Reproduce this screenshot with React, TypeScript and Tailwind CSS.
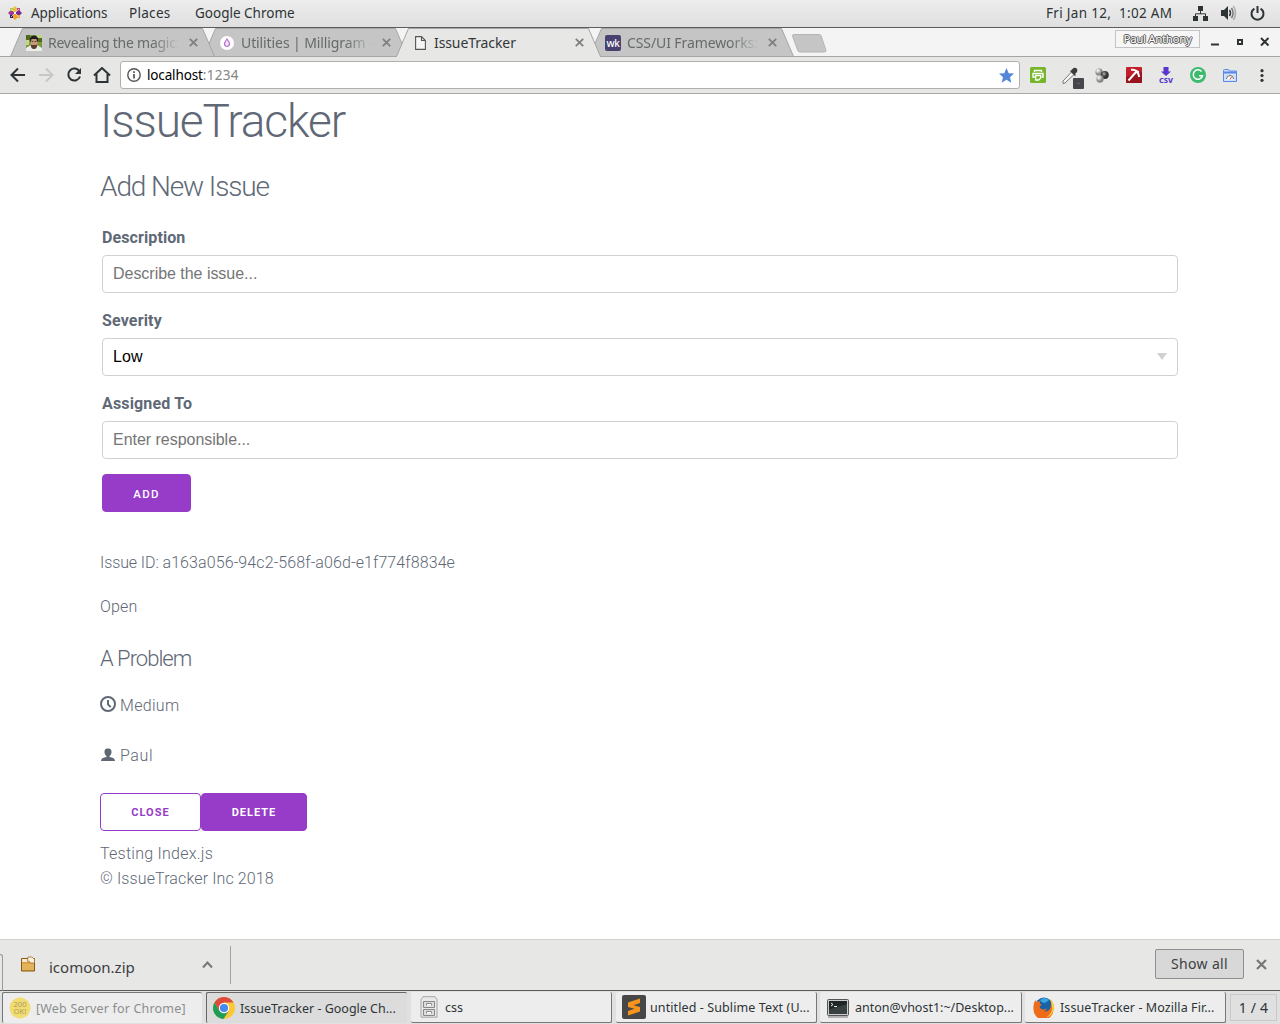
import React from "react";

const ui = "font-['Noto_Sans','Open_Sans',sans-serif] whitespace-nowrap";

function TabCross() {
  return (
    <svg width="9" height="9" viewBox="0 0 9 9" className="shrink-0" stroke="#7f8080" strokeWidth="1.8">
      <path d="M.8 .8 8.2 8.2M8.2 .8.8 8.2" />
    </svg>
  );
}

function Tab({ title, icon, active, place, spacing }: {
  title: string; icon: React.ReactNode; active?: boolean; place: string; spacing: string;
}) {
  const fade = active ? "" : "[mask-image:linear-gradient(to_right,black_calc(100%-28px),transparent)]";
  return (
    <div className={`relative -mr-3 h-[29px] w-[205px] shrink-0 ${place}`}>
      <svg className="absolute inset-0" width="205" height="29" viewBox="0 0 205 29">
        <path d="M.5 29 12.5 .5H192.5L204.5 29Z" fill={active ? "#e7e7e5" : "#c5c5c5"} />
        <path d="M.5 28.5 12.5 .5H192.5L204.5 28.5" fill="none" stroke="#a5a5a5" />
        {!active && <path d="M0 28.5H205" stroke="#a5a5a5" />}
      </svg>
      <div className="relative flex h-[29px] items-center pl-4">
        <span className="flex size-4 shrink-0 items-center justify-center">{icon}</span>
        <span className={`${ui} ml-1.5 ${spacing} ${fade} h-5 w-[132px] text-[14px] leading-5 ${active ? "text-[#33373a]" : "text-[#666a6a]"}`}>{title}</span>
        <span className="ml-auto mr-[17px] flex"><TabCross /></span>
      </div>
    </div>
  );
}

function TopPanel() {
  return (
    <header className={`${ui} flex h-7 items-center border-b border-[#5c5c5c] bg-linear-to-b from-[#ededed] to-[#dfdfdf] pb-px text-[13.5px] leading-5 text-[#2e3436]`}>
      <svg width="14" height="14" viewBox="0 0 14 14" className="ml-2 mr-[9px]">
        <path d="m7 0 2 2v4H5V2Z" fill="#e8c33c" />
        <path d="m14 7-2 2H8V5h4Z" fill="#7b2e8c" />
        <path d="m7 14-2-2V8h4v4Z" fill="#f0a02c" />
        <path d="m0 7 2-2h4v4H2Z" fill="#a03a98" />
        <path d="M2 2h3v3H2Z" fill="#b2c84f" /><path d="M9 2h3v3H9Z" fill="#c7459a" />
        <path d="M2 9h3v3H2Z" fill="#29246b" /><path d="M9 9h3v3H9Z" fill="#eba33a" />
        <path d="m3 3 8 8m0-8-8 8" stroke="#eee" strokeWidth=".7" />
      </svg>
      <span className="w-[98px] tracking-[-.1px]">Applications</span>
      <span className="w-[66px] tracking-[.3px]">Places</span>
      <span>Google Chrome</span>
      <span className="ml-auto w-[147px] whitespace-pre tracking-[.32px]">Fri Jan 12,  1:02 AM</span>
      <svg width="15" height="15" viewBox="0 0 15 15" fill="#2e3436">
        <path d="M5 0h5v5H5ZM0 10h5v5H0ZM10 10h5v5h-5Z" /><path d="M7.5 4v4M2.5 11V7.8h10V11" fill="none" stroke="#2e3436" />
      </svg>
      <svg width="16" height="16" viewBox="0 0 16 16" className="ml-[13px]" fill="none">
        <path d="M0 5h3l4-4v14l-4-4H0Z" fill="#2e3436" />
        <path d="M8.5 5q2 3 0 6" stroke="#2e3436" strokeWidth="1.5" />
        <path d="M10.5 3q3.2 5 0 10" stroke="#777" strokeWidth="1.5" />
        <path d="M12.5 1q4 7 0 14" stroke="#aaa" strokeWidth="1.5" />
      </svg>
      <svg width="15" height="15" viewBox="0 0 15 15" className="ml-[13px] mr-[15px]" fill="none" stroke="#2e3436" strokeWidth="2">
        <path d="M4.4 2.6a6 6 0 1 0 6.2 0M7.5 0v7" />
      </svg>
    </header>
  );
}

function TabStrip() {
  return (
    <div className="flex h-[29px] bg-[#f4f4f4] pl-2.5 shadow-[inset_0_-1px_0_#a5a5a5]">
      <Tab place="z-30" title="Revealing the magic:" spacing="tracking-[-.25px]" icon={
        <svg width="16" height="16" viewBox="0 0 16 16">
          <rect width="16" height="16" fill="#7d9b3d" /><path d="M0 0h4v5H0ZM12 3h4v4h-4Z" fill="#4e6a20" />
          <path d="M10 0h6v3h-5ZM0 5h3v5H0Z" fill="#c3d48e" />
          <path d="M0 16v-3l5-3h6l5 3v3Z" fill="#e8efe8" /><path d="M4.500 4h7v6q-1 4-3.500 4T4.500 10Z" fill="#c49a78" />
          <path d="M4 6.500V3q1-2.500 4-2.500T12 3v3.500h-1L10.500 4h-5L5 6.500Z" fill="#231d1b" />
          <path d="M4.700 9.500 6 10h4l1.300-.5Q11 14 8 14T4.700 9.500Z" fill="#5b3d30" /><path d="M5.800 6.500h1.500M8.800 6.500h1.500" stroke="#3b2820" strokeWidth=".8" />
        </svg>} />
      <Tab place="z-20" title="Utilities | Milligram -" spacing="tracking-[-.1px]" icon={
        <svg width="14" height="14" viewBox="0 0 14 14">
          <circle cx="7" cy="7" r="7" fill="#fff" />
          <path d="M7 3q2.500 3.200 2.500 4.800a2.500 2.500 0 0 1-5 0Q4.500 6.200 7 3Z" fill="#f0dcf8" stroke="#b36fd4" strokeWidth="1.200" />
          <path d="M7 6.500v3" stroke="#fff" />
        </svg>} />
      <Tab place="z-40" active title="IssueTracker" spacing="tracking-[-.1px]" icon={
        <svg width="11" height="14" viewBox="0 0 11 14" fill="#f5f5f5" stroke="#555" strokeWidth="1.1"><path d="M.6.6h5.900l3.900 3.900v8.900H.6ZM6.500.6v3.900h3.900" /></svg>} />
      <Tab place="z-30" title="CSS/UI Frameworks:" spacing="tracking-[-.1px]" icon={
        <span className="flex size-4 items-center justify-center rounded-[2px] bg-[#484170] font-['Noto_Sans',sans-serif] text-[10px] font-medium leading-none tracking-[-.3px] text-white">wk</span>} />
      <svg width="36" height="19" viewBox="0 0 36 19" className="ml-[9px] mt-[6px]">
        <path d="M3 .5h25q1.500 0 2 1l5 15q0 1.500-1.500 1.500H9q-1.500 0-2-1L1.500 2Q1.200.5 3 .5Z" fill="#c5c5c5" stroke="#b5b5b5" />
      </svg>
      <div className={`${ui} ml-auto mt-[2px] flex h-[18px] w-[85px] items-center justify-center border border-[#c3c3c3] bg-[#f6f6f6] text-[11.500px] tracking-[-.35px] text-white [text-shadow:1px_0_#555,-1px_0_#555,0_1px_#555,0_-1px_#555]`}>Paul Anthony</div>
      <svg width="60" height="12" viewBox="0 0 60 12" className="ml-[10px] mt-2 mr-[10px]" fill="none" stroke="#2e3436" strokeWidth="2">
        <path d="M1 8.500h8M28 4h4v4h-4ZM51 2l7.500 7.500M58.500 2 51 9.500" />
      </svg>
    </div>
  );
}

function Toolbar() {
  return (
    <div className="flex h-[37px] items-center border-b border-[#a8a8a8] bg-[#e7e7e5]">
      <svg width="102" height="16" viewBox="0 0 102 16" className="ml-[10px] mr-2" fill="none" stroke="#2e3436" strokeWidth="2">
        <path d="M15 8H2M8 1.500 1.500 8 8 14.500" />
        <path d="M29 8h13M36 1.500 42.500 8 36 14.500" stroke="#c6c7c7" />
        <path d="M69.500 4.500A6 6 0 1 0 70 9.500" /><path d="M71 1v6h-6Z" fill="#2e3436" stroke="none" />
        <path d="M84 8.500 92 1l8 7.500M86.500 7v8h11V7" />
      </svg>
      <div className={`${ui} flex h-7 w-[900px] items-center rounded-[3px] border border-[#b0b0b0] bg-white text-[13.500px]`}>
        <svg width="14" height="14" viewBox="0 0 14 14" className="ml-1.5 mr-[6px]" fill="none" stroke="#555" strokeWidth="1.400"><circle cx="7" cy="7" r="6.200" /><path d="M7 6v4.500M7 3.300v1.600" strokeWidth="1.700" /></svg>
        <span className="tracking-[-.15px] text-black">localhost<span className="tracking-[.35px] text-[#858585]">:1234</span></span>
        <svg width="15" height="15" viewBox="0 0 15 15" className="ml-auto mr-[5px]" fill="#5587d8"><path d="m7.500 0 2.200 5.200 5.300.4-4 3.600 1.300 5.500-4.800-3-4.800 3L4 9.200 0 5.600l5.300-.4Z" /></svg>
      </div>
      <div className="flex flex-1 items-center">
        <svg width="16" height="16" viewBox="0 0 16 16" className="ml-[10px]">
          <rect width="16" height="16" rx="1.500" fill="#76b729" />
          <path d="M4.500 5V3.500h7V5M5 10H3V6.500h10V10h-1.500" fill="none" stroke="#fff" strokeWidth="1.400" />
          <path d="M5.700 8.500h5V11l-2 2h-3Z" fill="#76b729" stroke="#fff" strokeWidth="1.300" />
        </svg>
        <svg width="24" height="24" viewBox="0 0 24 24" className="ml-[15px] mt-[5px]">
          <path d="m2 15 8.500-9 2.500 2.500-9 8.500-2 .5Z" fill="#f4f4f4" stroke="#777" />
          <path d="m9 5 5 5 1-1-1-1 2-2q1-3-1-4t-3.500 1L10 4.500Z" fill="#3c3c3c" />
          <rect x="12" y="12" width="11" height="11" rx="1" fill="#47474b" /><path d="M16.500 17.500h2" stroke="#777" />
        </svg>
        <svg width="14" height="15" viewBox="0 0 14 15" className="ml-[10px]">
          <defs><radialGradient id="ball" cx=".35" cy=".3"><stop stopColor="#fff" /><stop offset="1" stopColor="#888" /></radialGradient><radialGradient id="dark" cx=".4" cy=".35"><stop stopColor="#bbb" /><stop offset=".6" stopColor="#444" /><stop offset="1" stopColor="#333" /></radialGradient></defs>
          <circle cx="4" cy="4" r="3.700" fill="url(#ball)" /><circle cx="9.800" cy="7" r="4" fill="url(#dark)" /><circle cx="5" cy="11" r="3.700" fill="url(#ball)" />
        </svg>
        <svg width="16" height="16" viewBox="0 0 16 16" className="ml-[17px]">
          <rect width="16" height="16" rx="1" fill="#c21f2a" /><path d="M0 10 16 5v10q0 1-1 1H1q-1 0-1-1Z" fill="#98131d" />
          <path d="m2.500 13.500 8-9M5 2.800q7-1.200 8.200 7.200" fill="none" stroke="#fff" strokeWidth="2" /><path d="m8 3 5 1v5Z" fill="#fff" />
        </svg>
        <svg width="14" height="16" viewBox="0 0 14 16" className="ml-[17px] overflow-visible">
          <path d="M4.500 0h5v4.500H12L7 9 2 4.500h2.500Z" fill="#5837d0" />
          <text x="0" y="15.500" fontFamily="Noto Sans" fontWeight="800" fontSize="7.500" textLength="14" lengthAdjust="spacingAndGlyphs" fill="#5837d0">CSV</text>
        </svg>
        <svg width="16" height="16" viewBox="0 0 16 16" className="ml-[17px]"><circle cx="8" cy="8" r="8" fill="#3dba6e" /><path d="M11.500 4.500a4.700 4.700 0 1 0 1 4.200H9.200" fill="none" stroke="#fff" strokeWidth="1.500" /></svg>
        <svg width="14" height="13" viewBox="0 0 14 13" className="ml-[17px]"><path d="M.5 12.500V1.500q0-1 1-1h4l1 1.500h7v10.500Z" fill="#cfe1fb" stroke="#5c86e8" /><path d="M1 3.500h12" stroke="#5c86e8" strokeWidth="2" /><path d="M3 10.500q0-4.500 4-4.500t4 4.500Z" fill="#fff" /><path d="M3.500 10q0-3.500 3.500-3.500t3.500 3.500" fill="none" stroke="#666" /><path d="m7 10.500 1.500-2.500" stroke="#c44" /></svg>
        <svg width="4" height="13" viewBox="0 0 4 13" className="ml-auto mr-[16px]" fill="#2e3436"><circle cx="2" cy="1.700" r="1.600" /><circle cx="2" cy="6.500" r="1.600" /><circle cx="2" cy="11.300" r="1.600" /></svg>
      </div>
    </div>
  );
}

const field = "flex h-[38px] w-full items-center rounded-[4px] border border-[#d1d1d1] bg-white px-2.5 font-['Liberation_Sans',Arial,sans-serif] text-[16px] font-normal tracking-[-.03px]";
const button = "h-[38px] rounded-[4px] border border-[#963cc8] uppercase";

function Page() {
  return (
    <main className="h-[845px] overflow-hidden bg-white px-[100px] font-['Roboto',sans-serif] text-[16px] font-light leading-[25px] tracking-[.16px] text-[#606876]">
      <h1 className="text-[46px] leading-[55px] tracking-[-1.080px]">IssueTracker</h1>
      <h3 className="mt-5 text-[28px] leading-9 tracking-[-1.120px]">Add New Issue</h3>
      <form className="mt-5 px-0.5">
        <label className="mb-[5px] block font-bold tracking-[.1px]">Description</label>
        <input className={`${field} placeholder:text-[#757575]`} placeholder="Describe the issue..." />
        <label className="mb-[5px] mt-[15px] block font-bold">Severity</label>
        <div className={`${field} justify-between pb-0.5 text-black`}>
          <span className="tracking-[.15px]">Low</span>
          <svg width="10" height="7" viewBox="0 0 10 7" className="mt-px" fill="#d1d1d1"><path d="M0 0h10L5 7Z" /></svg>
        </div>
        <label className="mb-[5px] mt-[15px] block font-bold">Assigned To</label>
        <input className={`${field} placeholder:text-[#757575]`} placeholder="Enter responsible..." />
        <button type="button" className={`${button} mt-[15px] block w-[89px] bg-[#963cc8] pt-[3px] text-[11.500px] font-medium tracking-[1.300px] text-white`}>Add</button>
      </form>
      <p className="mt-[38px] tracking-[.06px]"><span className="tracking-[-.1px]">Issue ID: </span><span className="tracking-[.1px]">a163a056-94c2-568f-a06d-e1f774f8834e</span></p>
      <p className="mt-[19px]">Open</p>
      <h4 className="mt-[25px] text-[22px] leading-[29px] tracking-[-1px]">A Problem</h4>
      <p className="mt-[20px] flex items-center gap-1 tracking-[.3px]">
        <svg width="16" height="16" viewBox="0 0 16 16" className="-mt-[3px]" fill="none" stroke="#606876" strokeWidth="2"><circle cx="8" cy="8" r="7" /><path d="M8 4v4.400l2.700 2.700" /></svg>
        Medium
      </p>
      <p className="mt-[25px] flex items-center gap-1 tracking-[.6px]">
        <svg width="16" height="16" viewBox="0 0 16 16" className="-mt-[2px]" fill="#606876"><path d="M9.500 10v-.8c1-.6 2-2.200 2-3.900C11.500 3 11 1.500 8 1.500S4.500 3 4.500 5.300c0 1.700 1 3.300 2 3.900v.8C3 10.300 1 12 1 14h14c0-2-2-3.700-5.500-4Z" /></svg>
        Paul
      </p>
      <div className="mt-[25px] flex">
        <button className={`${button} w-[101px] bg-white pt-px text-[11px] font-bold tracking-[1px] text-[#963cc8]`}>Close</button>
        <button className={`${button} w-[106px] bg-[#963cc8] pt-px text-[11px] font-bold tracking-[1px] text-white`}>Delete</button>
      </div>
      <p className="mt-[10px] tracking-[.25px]">Testing Index.js</p>
      <p className="tracking-[.12px]">© IssueTracker Inc 2018</p>
    </main>
  );
}

function DownloadShelf() {
  return (
    <div className={`${ui} flex h-[51px] border-t border-[#cfcfcf] bg-[#e7e7e5] text-[#3b4042]`}>
      <div className="mt-[14px] h-[37px] w-[3px] rounded-tr-[4px] border-r border-t border-[#999]" />
      <svg width="16" height="17" viewBox="0 0 16 17" className="ml-[17px] mt-4">
        <path d="M1.500 2.500h5v3h8v9.500h-13Z" fill="#d99c3c" /><path d="M2 7.500h12V14H2Z" fill="#e3b35c" />
        <path d="M1.500 2.500h13V15h-13Z" fill="none" stroke="#8a5a14" /><path d="M2 3h5v3H2Z" fill="#f6ead2" />
        <path d="M8 1h4l2.500 2.500V7h-4Q10 5 7.500 5Z" fill="#f8efdc" stroke="#a1712a" strokeWidth=".8" />
      </svg>
      <span className="ml-[13px] mt-[17px] text-[15px] leading-5 tracking-[0px]">icomoon.zip</span>
      <svg width="11" height="8" viewBox="0 0 11 8" className="ml-[67px] mt-[21px]" fill="none" stroke="#777" strokeWidth="2"><path d="m1 6.500 4.500-5 4.500 5" /></svg>
      <div className="ml-[17px] mt-[6px] h-[38px] w-px bg-[#a3a3a3]" />
      <div className="ml-auto mt-[9px] flex h-[30px] w-[89px] items-center justify-center rounded-[2px] border border-[#8c8e8f] bg-[#d8d8d8] pb-0.5 text-[14px] tracking-[.35px]">Show all</div>
      <svg width="11" height="11" viewBox="0 0 11 11" className="ml-[12px] mr-[13px] mt-[19px]" stroke="#777" strokeWidth="2.200"><path d="m1 1 9 9m0-9-9 9" /></svg>
    </div>
  );
}

function Task({ children, label, look, spacing }: { children: React.ReactNode; label: string; look: string; spacing: string }) {
  return (
    <div className={`flex h-[31px] shrink-0 items-center rounded-[2px] pl-[5px] ${look}`}>
      <span className="flex w-6 shrink-0 justify-center">{children}</span>
      <span className={`mt-0.5 ${spacing}`}>{label}</span>
    </div>
  );
}

const raised = "border-b border-r border-[#777] bg-[#ededed]";

function Taskbar() {
  return (
    <footer className={`${ui} flex h-[34px] border-t border-[#5c5c5c] bg-[#e0e0e0] pl-0.5 pt-px text-[12.500px] text-[#2e3436]`}>
      <Task look="w-[200px] border-l border-t border-[#777] bg-[#ededed] text-[#8c8e8e]" spacing="ml-1 tracking-[.18px]" label="[Web Server for Chrome]">
        <svg width="22" height="22" viewBox="0 0 22 22"><circle cx="11" cy="11" r="10.500" fill="#f2dc72" />
          <text x="11" y="9.500" textAnchor="middle" fontFamily="Noto Sans" fontSize="7.500" fill="#a89b60">200</text><text x="11" y="17" textAnchor="middle" fontFamily="Noto Sans" fontSize="7.500" fill="#a89b60">OK!</text></svg>
      </Task>
      <Task look="ml-1 w-[201px] border-l border-t border-[#666] bg-[#dcdcdc]" spacing="ml-1 tracking-[0px]" label="IssueTracker - Google Ch...">
        <svg width="22" height="22" viewBox="0 0 22 22">
          <circle cx="11" cy="11" r="11" fill="#fcc934" /><path d="M1.470 5.500A11 11 0 0 1 20.530 5.500H11L6.200 13.700Z" fill="#dd4b3e" /><path d="M1.470 5.500 6.240 13.700 11 16.500 10.500 22A11 11 0 0 1 1.470 5.500Z" fill="#1f9d58" /><path d="m10.500 22 5.300-8.300L11 16.500 6.200 13.700Z" fill="#1f9d58" />
          <circle cx="11" cy="11" r="5.200" fill="#fff" /><circle cx="11" cy="11" r="4.100" fill="#4886f0" />
        </svg>
      </Task>
      <Task look={`ml-1 w-[201px] ${raised}`} spacing="ml-[5px]" label="css">
        <svg width="18" height="22" viewBox="0 0 18 22" className="ml-0.5" fill="#ddd" stroke="#888"><path d="M3 .7h12l2 3v17.500H1V3.700Z" fill="#e8e8e6" stroke="#a5a5a5" /><path d="M3.500 5.500h11v6h-11ZM3.500 13.500h11v6h-11Z" /><path d="M6.500 9.500v-2h5v2M6.500 17.500v-2h5v2" fill="#fff" /></svg>
      </Task>
      <Task look={`ml-[4px] w-[201px] ${raised}`} spacing="ml-[5px] tracking-[.1px]" label="untitled - Sublime Text (U...">
        <svg width="24" height="24" viewBox="0 0 24 24" className="ml-0.5 shrink-0"><rect width="24" height="24" rx="2" fill="#474747" /><path d="m6 7.500 12-4v4.500l-6.500 2.200L18 12v4.500L6 20.500V16l6.500-2.200L6 12Z" fill="#f7941d" /></svg>
      </Task>
      <Task look={`ml-[3px] w-[202px] ${raised}`} spacing="ml-[6px] tracking-[0px]" label="anton@vhost1:~/Desktop...">
        <svg width="22" height="19" viewBox="0 0 22 19" className="ml-px mt-0.5"><rect x=".5" y=".5" width="21" height="16" rx="1" fill="#ccc" stroke="#555" /><rect x="2" y="2" width="18" height="13" fill="#202626" /><path d="M2 10.500 20 5v10H2Z" fill="#394140" /><path d="m4 4 2 1.500L4 7M7 7.500h3" fill="none" stroke="#eee" /><path d="M1 18h20" stroke="#777" /></svg>
      </Task>
      <Task look={`ml-[3px] w-[201px] ${raised}`} spacing="ml-[6px] tracking-[.08px]" label="IssueTracker - Mozilla Fir...">
        <svg width="21" height="21" viewBox="0 0 21 21" className="ml-0.5">
          <circle cx="11" cy="9.500" r="9" fill="#1762aa" /><path d="M7 3q5-4 9 0-3 3-5 3T7 3Z" fill="#3ba6df" />
          <path d="M17 2q5 5 3.500 11A10 10 0 0 1 .5 12Q0 6 2.500 3l.8 2q2-1.200 4-.5Q6 6.500 8.500 7.500 8 9 6.500 9.500q1 3.500 4.500 3 2-.3 3-1.500-.5 3-3 3.500 5 .5 6.500-4T17 2Z" fill="#ee6c19" /><path d="M17 2q5 5 3.500 11-2 6-7 7.500 6-5 5.500-10T17 2Z" fill="#fbd22c" />
        </svg>
      </Task>
      <div className="ml-[4px] mt-0.5 flex h-[27px] w-[47px] items-center justify-center border border-[#c9c9c9] bg-[#e0e0e0] text-[14px] tracking-[.2px]">1 / 4</div>
    </footer>
  );
}

export default function App() {
  return (
    <div className="h-[1024px] w-[1280px] overflow-hidden bg-white">
      <TopPanel />
      <TabStrip />
      <Toolbar />
      <Page />
      <DownloadShelf />
      <Taskbar />
    </div>
  );
}
